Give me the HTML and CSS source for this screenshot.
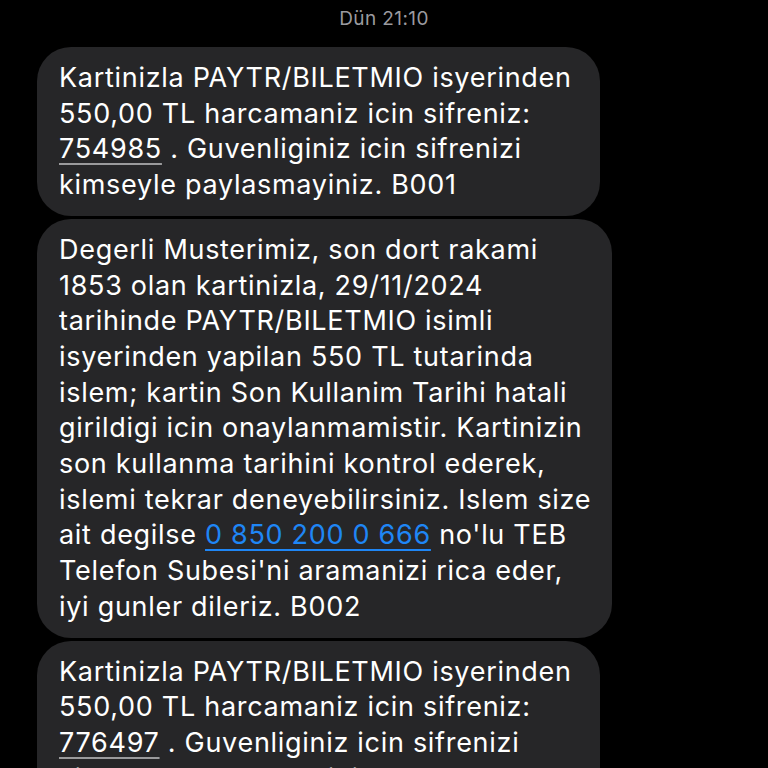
FILE: index.html
```html
<!DOCTYPE html>
<html lang="tr">
<head>
<meta charset="utf-8">
<title>Mesajlar</title>
<link rel="stylesheet" href="styles.css">
</head>
<body>
<div class="thread">
  <div class="stamp">Dün 21:10</div>
  <div class="bubble b1">Kartinizla PAYTR/BILETMIO isyerinden<br>550,00 TL harcamaniz icin sifreniz:<br><span class="code">754985</span> . Guvenliginiz icin sifrenizi<br>kimseyle paylasmayiniz. B001</div>
  <div class="bubble b2">Degerli Musterimiz, son dort rakami<br>1853 olan kartinizla, 29/11/2024<br>tarihinde PAYTR/BILETMIO isimli<br>isyerinden yapilan 550 TL tutarinda<br>islem; kartin Son Kullanim Tarihi hatali<br>girildigi icin onaylanmamistir. Kartinizin<br>son kullanma tarihini kontrol ederek,<br>islemi tekrar deneyebilirsiniz. Islem size<br>ait degilse <span class="link">0 850 200 0 666</span> no'lu TEB<br>Telefon Subesi'ni aramanizi rica eder,<br>iyi gunler dileriz. B002</div>
  <div class="bubble b3">Kartinizla PAYTR/BILETMIO isyerinden<br>550,00 TL harcamaniz icin sifreniz:<br><span class="code">776497</span> . Guvenliginiz icin sifrenizi<br>kimseyle paylasmayiniz. B001</div>
</div>
</body>
</html>
```
FILE: styles.css
```css
html, body {
  margin: 0;
  padding: 0;
  background: #000;
}
body {
  width: 768px;
  height: 768px;
  overflow: hidden;
  font-family: Inter, "Noto Sans", sans-serif;
}
.thread {
  display: flex;
  flex-direction: column;
  align-items: flex-start;
  gap: 3px;
  padding-left: 37px;
}
.stamp {
  align-self: center;
  color: #9a9a9f;
  font-size: 19px;
  line-height: 22px;
  letter-spacing: 0.4px;
  padding-top: 8px;
  padding-bottom: 14px;
  margin-left: -37px;
}
.bubble {
  background: #262628;
  color: #fff;
  font-size: 27px;
  line-height: 35.7px;
  padding: 13px 28px 13px 22px;
  border-radius: 34px;
  white-space: nowrap;
  letter-spacing: 0.7px;
}
.b2 {
  padding-right: 21px;
}
.code {
  text-decoration: underline;
  text-decoration-color: #9a9a9c;
  text-decoration-thickness: 1.5px;
  text-underline-offset: 5px;
}
.link {
  color: #1f86f5;
  text-decoration: underline;
  text-decoration-thickness: 1.5px;
  text-underline-offset: 5px;
}
```
